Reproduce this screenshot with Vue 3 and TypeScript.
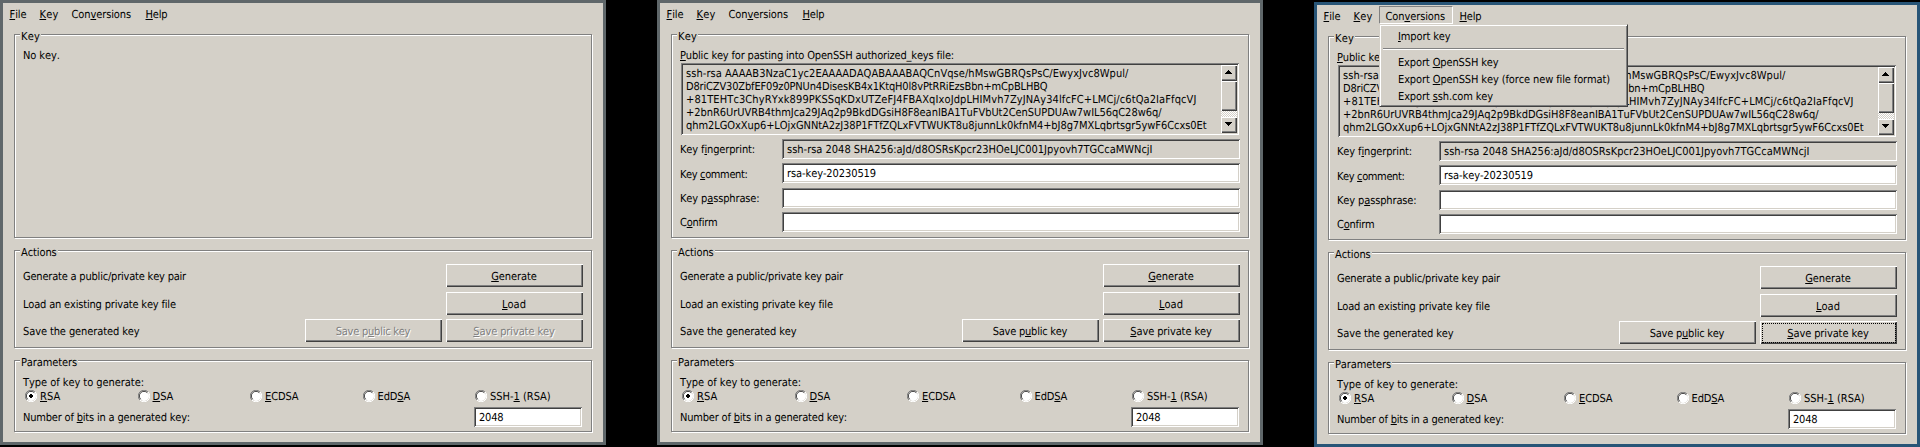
<script setup lang="ts">
import { defineComponent, h, onMounted, ref } from 'vue'

/* Text run with an "&" mnemonic marker, tracked to an exact advance width. */
const Caption = defineComponent({
  props: { text: { type: String, required: true }, width: { type: Number, required: true } },
  setup(props) {
    const el = ref<HTMLElement | null>(null)
    const spacing = ref(0)
    onMounted(() => {
      if (!el.value) return
      const count = props.text.replace('&', '').length
      spacing.value = (props.width + 1 - el.value.getBoundingClientRect().width) / count
    })
    return () => {
      const at = props.text.indexOf('&')
      const parts =
        at < 0
          ? [props.text]
          : [props.text.slice(0, at), h('u', { class: 'mnemonic' }, props.text[at + 1]), props.text.slice(at + 2)]
      return h('span', { ref: el, class: 'caption', style: { letterSpacing: spacing.value + 'px' } }, parts)
    }
  },
})

interface Pane {
  id: string
  focused: boolean
  hasKey: boolean
  menuOpen: boolean
}
type Run = [string, number]

const panes: Pane[] = [
  { id: 'empty', focused: false, hasKey: false, menuOpen: false },
  { id: 'loaded', focused: false, hasKey: true, menuOpen: false },
  { id: 'menu', focused: true, hasKey: true, menuOpen: true },
]
const menus: Run[] = [['&File', 16], ['&Key', 18], ['Con&versions', 58.5], ['&Help', 21]]
const exportItems: Run[] = [
  ['Export &OpenSSH key', 99.5],
  ['Export &OpenSSH key (force new file format)', 211],
  ['Export &ssh.com key', 94],
]
const keyLines: Run[] = [
  ['ssh-rsa AAAAB3NzaC1yc2EAAAADAQABAAABAQCnVqse/hMswGBRQsPsC/EwyxJvc8Wpul/', 441.5],
  ['D8riCZV30ZbfEF09z0PNUn4DisesKB4x1KtqH0l8vPtRRiEzsBbn+mCpBLHBQ', 360.5],
  ['+81TEHTc3ChyRYxk899PKSSqKDxUTZeFJ4FBAXqIxoJdpLHIMvh7ZyJNAy34lfcFC+LMCj/c6tQa2IaFfqcVJ', 509.5],
  ['+2bnR6UrUVRB4thmJca29JAq2p9BkdDGsiH8F8eanIBA1TuFVbUt2CenSUPDUAw7wIL56qC28w6q/', 474.5],
  ['qhm2LGOxXup6+LOjxGNNtA2zJ38P1FTfZQLxFVTWUKT8u8junnLk0kfnM4+bJ8g7MXLqbrtsgr5ywF6Ccxs0Et', 519.5],
]
const fields: { id: string; label: Run; value?: Run }[] = [
  { id: 'fingerprint', label: ['Key f&ingerprint:', 74], value: ['ssh-rsa 2048 SHA256:aJd/d8OSRsKpcr23HOeLJC001Jpyovh7TGCcaMWNcjI', 364.5] },
  { id: 'comment', label: ['Key &comment:', 66.5], value: ['rsa-key-20230519', 88] },
  { id: 'passphrase', label: ['Key p&assphrase:', 78.5] },
  { id: 'confirm', label: ['C&onfirm', 36.5] },
]
const keyTypes: Run[] = [['&RSA', 19.5], ['&DSA', 19.7], ['&ECDSA', 32.5], ['EdD&SA', 31.7], ['SSH-&1 (RSA)', 59.5]]
</script>

<template>
  <main class="desktop">
    <section v-for="p in panes" :key="p.id" class="window" :class="{ focused: p.focused }">
      <nav class="menubar">
        <div v-for="(m, i) in menus" :key="m[0]" class="menu" :class="['menu-' + i, { open: p.menuOpen && i === 2 }]">
          <Caption :text="m[0]" :width="m[1]" />
          <div v-if="p.menuOpen && i === 2" class="dropdown">
            <div class="item first"><Caption text="&Import key" :width="51.5" /></div>
            <div class="separator"></div>
            <div v-for="e in exportItems" :key="e[0]" class="item"><Caption :text="e[0]" :width="e[1]" /></div>
          </div>
        </div>
      </nav>

      <div class="group key-group">
        <div class="legend"><Caption text="Key" :width="18" /></div>
        <div v-if="!p.hasKey" class="heading"><Caption text="No key." :width="35.7" /></div>
        <template v-else>
          <div class="heading"><Caption text="&Public key for pasting into OpenSSH authorized_keys file:" :width="273" /></div>
          <div class="keybox">
            <div class="keytext">
              <div v-for="l in keyLines" :key="l[0]" class="keyline"><Caption :text="l[0]" :width="l[1]" /></div>
            </div>
            <div class="scrollbar">
              <div class="raised arrow"><svg width="7" height="4" viewBox="0 0 7 4"><path d="M3 0h1v1h1v1h1v1h1v1H0V3h1V2h1V1h1z" /></svg></div>
              <div class="raised thumb"></div>
              <div class="track"></div>
              <div class="raised arrow"><svg width="7" height="4" viewBox="0 0 7 4"><path d="M0 0h7v1H6v1H5v1H4v1H3V3H2V2H1V1H0z" /></svg></div>
            </div>
          </div>
          <div v-for="f in fields" :key="f.id" class="field" :class="f.id">
            <div class="field-label"><Caption :text="f.label[0]" :width="f.label[1]" /></div>
            <div class="sunken"><Caption v-if="f.value" :text="f.value[0]" :width="f.value[1]" /></div>
          </div>
        </template>
      </div>

      <div class="group actions-group">
        <div class="legend"><Caption text="Actions" :width="34.7" /></div>
        <div class="action">
          <Caption text="Generate a public/private key pair" :width="162" />
          <div class="raised button"><Caption text="&Generate" :width="44.6" /></div>
        </div>
        <div class="action load">
          <Caption text="Load an existing private key file" :width="151.8" />
          <div class="raised button"><Caption text="&Load" :width="23" /></div>
        </div>
        <div class="action save">
          <Caption text="Save the generated key" :width="115.5" />
          <div class="pair">
            <div class="raised button" :class="{ disabled: !p.hasKey }"><Caption text="Save p&ublic key" :width="73.5" /></div>
            <div class="raised button" :class="{ disabled: !p.hasKey, active: p.focused }"><Caption text="&Save private key" :width="80.5" /></div>
          </div>
        </div>
      </div>

      <div class="group params-group">
        <div class="legend"><Caption text="Parameters" :width="55" /></div>
        <div class="type-label"><Caption text="Type of key to generate:" :width="120" /></div>
        <div class="radios">
          <div v-for="(k, i) in keyTypes" :key="k[0]" class="radio">
            <svg class="dial" width="12" height="12" viewBox="0 0 12 12">
              <circle cx="6" cy="6" r="5" fill="#fff" />
              <path d="M1.9 10.1A5.5 5.5 0 0 1 10.1 1.9" fill="none" stroke="#808080" />
              <path d="M2.7 9.3A4.5 4.5 0 0 1 9.3 2.7" fill="none" stroke="#404040" />
              <path d="M10.1 1.9A5.5 5.5 0 0 1 1.9 10.1" fill="none" stroke="#fff" />
              <path v-if="i === 0" d="M5 4h2v1h1v2h-1v1h-2v-1h-1v-2h1z" fill="#000" />
            </svg>
            <Caption :text="k[0]" :width="k[1]" />
          </div>
        </div>
        <div class="bits">
          <Caption text="Number of &bits in a generated key:" :width="166" />
          <div class="sunken"><Caption text="2048" :width="23.5" /></div>
        </div>
      </div>
    </section>
  </main>
</template>

<style>
html,
body {
  margin: 0;
  background: #000;
  overflow: hidden;
}
.caption {
  display: inline-block;
  white-space: pre;
  height: 13px;
  line-height: 13px;
}
.mnemonic {
  text-decoration: underline;
  text-decoration-thickness: 1px;
  text-underline-offset: 1px;
  text-decoration-skip-ink: none;
}
</style>

<style scoped>
.desktop {
  display: flex;
  justify-content: space-between;
  align-items: flex-start;
  width: 1920px;
  height: 447px;
  background: #000;
  color: #000;
  font: 11px/13px 'DejaVu Sans Condensed', 'DejaVu Sans', sans-serif;
  font-stretch: condensed;
  text-rendering: geometricPrecision;
  font-kerning: none;
  font-variant-ligatures: none;
}
.desktop * {
  box-sizing: border-box;
}
.window {
  width: 606px;
  height: 445px;
  box-sizing: border-box;
  border: 3px solid #5f676a;
  background: #d4d0c8;
  padding: 1px 0 0;
}
.window.focused {
  margin-top: 2px;
  border-color: #285577;
}
.menubar {
  display: flex;
  height: 18px;
}
.menu {
  position: relative;
  height: 18px;
  padding: 3px 0 0 5.5px;
  border: 1px solid transparent;
}
.menu-0 { width: 30px; }
.menu-1 { width: 32px; }
.menu-2 { width: 74px; }
.menu-3 { width: 35px; }
.menu.open {
  border-color: #808080 #fff #fff #808080;
}
.menu .caption {
  display: block;
  width: max-content;
}
.dropdown {
  position: absolute;
  z-index: 5;
  left: -1px;
  top: 17px;
  width: 249px;
  height: 83px;
  background: #d4d0c8;
  border: 1px solid;
  border-color: #d4d0c8 #404040 #404040 #d4d0c8;
  box-shadow: inset 1px 1px #fff, inset -1px -1px #808080;
  padding: 5px 3px 0;
}
.item {
  height: 17px;
  padding-left: 15px;
}
.item.first {
  height: 18px;
}
.separator {
  height: 2px;
  border-top: 1px solid #808080;
  border-bottom: 1px solid #fff;
  margin-bottom: 6px;
}
.group {
  width: 578px;
  margin: 12px 0 0 11px;
  padding-left: 9px;
  border: 1px solid #808080;
  box-shadow: 1px 1px #fff, inset 1px 1px #fff;
}
.key-group { height: 204px; }
.actions-group { height: 98px; }
.params-group { height: 72px; }
.legend {
  width: fit-content;
  height: 13px;
  margin: -5px 0 0 -4px;
  padding: 0 1px;
  background: #d4d0c8;
}
.heading {
  height: 13px;
  margin-top: 6px;
  margin-left: -1px;
}
.keybox {
  display: flex;
  justify-content: space-between;
  width: 558px;
  height: 72px;
  margin: 1px 0 4px;
  padding: 2px;
  background: #d4d0c8;
  box-shadow: inset 1px 1px #808080, inset -1px -1px #fff, inset 2px 2px #404040, inset -2px -2px #d4d0c8;
}
.keytext {
  padding: 2px 0 0 3px;
}
.keyline {
  height: 13px;
}
.scrollbar {
  display: flex;
  flex-direction: column;
  width: 16px;
  height: 68px;
}
.raised {
  background: #d4d0c8;
  box-shadow: inset 1px 1px #fff, inset -1px -1px #404040, inset -2px -2px #808080;
}
.arrow {
  display: flex;
  align-items: center;
  justify-content: center;
  height: 16px;
  padding-right: 1px;
  padding-bottom: 2px;
}
.thumb {
  height: 30px;
}
.track {
  flex: 1;
  background: repeating-conic-gradient(#fff 0 25%, #d4d0c8 0 50%) 0 0 / 2px 2px;
}
.field {
  display: flex;
  height: 20px;
  margin-bottom: 4px;
}
.field.comment {
  margin-bottom: 5px;
}
.field-label {
  width: 101px;
  padding-top: 4px;
  margin-left: -1px;
  margin-right: 1px;
}
.comment .field-label {
  padding-top: 5px;
}
.sunken {
  height: 20px;
  width: 458px;
  padding: 4px 0 0 5px;
  background: #fff;
  box-shadow: inset 1px 1px #808080, inset -1px -1px #fff, inset 2px 2px #404040, inset -2px -2px #d4d0c8;
}
.fingerprint .sunken {
  background: #d4d0c8;
}
.action {
  display: flex;
  justify-content: space-between;
  width: 560px;
  height: 23px;
  margin: 5px 0 0 -1px;
}
.action > .caption {
  margin-top: 6px;
}
.action.save {
  margin-top: 4px;
}
.pair {
  display: flex;
  gap: 4px;
}
.button {
  position: relative;
  display: flex;
  justify-content: center;
  width: 137px;
  height: 23px;
  padding-top: 6px;
  padding-right: 1px;
}
.button.disabled {
  color: #808080;
  text-shadow: 1px 1px #fff;
}
.button.active::after {
  content: '';
  position: absolute;
  inset: 2px 1px 1px 2px;
  border: 1px dotted #000;
}
.type-label {
  height: 13px;
  margin: 7px 0 1px -1px;
}
.radios {
  display: flex;
  height: 13px;
  margin-left: 1px;
}
.radio {
  display: flex;
  width: 112.5px;
  flex: none;
}
.dial {
  margin-right: 3px;
}
.bits {
  display: flex;
  justify-content: space-between;
  width: 559px;
  margin: 4px 0 0 -1px;
}
.bits > .caption {
  margin-top: 4px;
}
.bits .sunken {
  width: 108px;
}
</style>
